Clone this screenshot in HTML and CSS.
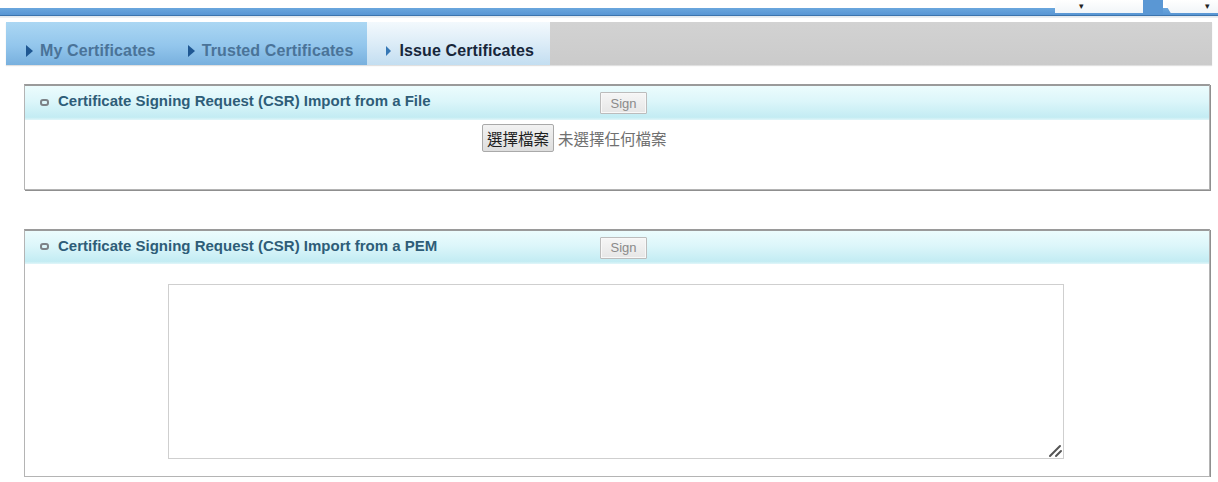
FILE: index.html
```html
<!DOCTYPE html>
<html lang="zh-Hant">
<head>
<meta charset="utf-8">
<title>Issue Certificates</title>
<link rel="stylesheet" href="styles.css">
</head>
<body>
<div class="topbar">
  <div class="sel sel-a"><span class="caret">&#9662;</span></div>
  <div class="sel-gap"></div>
  <div class="sel sel-b"><span class="caret">&#9662;</span></div>
</div>
<nav class="tabs">
  <div class="tab-group">
    <a class="tab"><svg class="arrow" viewBox="0 0 7 12" width="7" height="12"><path d="M0 0 L7 6 L0 12 Z"/></svg><span>My Certificates</span></a>
    <a class="tab tab-2"><svg class="arrow" viewBox="0 0 7 12" width="7" height="12"><path d="M0 0 L7 6 L0 12 Z"/></svg><span>Trusted Certificates</span></a>
  </div>
  <a class="tab active"><svg class="arrow" viewBox="0 0 7 12" width="7" height="12"><path d="M1 1 L6 6 L1 11 Z"/></svg><span>Issue Certificates</span></a>
  <div class="tab-rest"></div>
</nav>

<section class="panel panel-file">
  <header class="panel-head">
    <div class="panel-title"><i class="dot"></i>Certificate Signing Request (CSR) Import from a File</div>
    <button class="sign" type="button">Sign</button>
  </header>
  <div class="panel-body body-file">
    <div class="file">
      <span class="file-btn">選擇檔案</span>
      <span class="file-name">未選擇任何檔案</span>
    </div>
  </div>
</section>

<section class="panel panel-pem">
  <header class="panel-head head-pem">
    <div class="panel-title"><i class="dot"></i>Certificate Signing Request (CSR) Import from a PEM</div>
    <button class="sign" type="button">Sign</button>
  </header>
  <div class="panel-body body-pem">
    <div class="pem-wrap">
      <textarea class="pem"></textarea>
      <svg class="grip" viewBox="0 0 16 16" width="16" height="16"><path d="M3 14 L13 4 M9 14 L14 9" stroke="#555" stroke-width="2" stroke-linecap="round" fill="none"/></svg>
    </div>
  </div>
</section>
</body>
</html>
```
FILE: styles.css
```css
html, body {
  margin: 0;
  padding: 0;
  background: #ffffff;
  font-family: "Liberation Sans", Arial, sans-serif;
}

.topbar {
  height: 18px;
  display: flex;
  justify-content: flex-end;
  align-items: flex-start;
  background: linear-gradient(to bottom,
    #ffffff 0, #ffffff 8px,
    #6aa6dd 8px, #5896d4 15px,
    #3c74ad 15px, #3c74ad 16px,
    #dfe6ec 16px, #eef1f4 18px);
}

.sel {
  height: 13px;
  background: linear-gradient(#ffffff, #f1f5f8);
  display: flex;
  align-items: center;
}
.sel-a {
  width: 88px;
  justify-content: flex-start;
  padding-left: 24px;
  box-sizing: border-box;
}
.sel-gap {
  width: 20px;
  height: 15px;
  background: #5a97d4;
}
.sel-b {
  width: 55px;
  justify-content: flex-end;
  padding-right: 8px;
  box-sizing: border-box;
  clip-path: polygon(14% 100%, 0 0, 100% 0, 100% 100%);
}
.caret {
  font-size: 9px;
  line-height: 9px;
  color: #222;
}

.tabs {
  display: flex;
  height: 43px;
  margin: 4px 6px 0 6px;
  box-shadow: 0 1px 1px rgba(0,0,0,0.12);
}
.tab-group {
  display: flex;
  background: linear-gradient(to bottom, #abd7f3 0%, #93c6ec 55%, #78b0de 100%);
}
.tab {
  display: flex;
  align-items: center;
  gap: 7px;
  height: 100%;
  box-sizing: border-box;
  padding: 14px 12px 0 20px;
  font-size: 16px;
  font-weight: bold;
  letter-spacing: 0.12px;
  color: #4a7398;
  white-space: nowrap;
}
.tab-2 {
  padding-right: 14px;
}
.tab .arrow {
  fill: #1f5792;
  flex: none;
}
.tab.active {
  padding-left: 18px;
  padding-right: 16px;
  color: #17263a;
  background: linear-gradient(to bottom, #f3f9fd 0%, #dcecf7 50%, #c3def1 100%);
}
.tab.active .arrow {
  fill: #3577b5;
}
.tab-rest {
  flex: 1;
  background: linear-gradient(to bottom, #d2d2d2 0%, #cbcbcb 100%);
}

.panel {
  margin-left: 24px;
  width: 1186px;
  box-sizing: border-box;
  border: 1px solid #b4b4b4;
  border-top: 2px solid #9a9a9a;
  box-shadow: 1px 1px 0 #8f8f8f;
  background: #ffffff;
}
.panel-file {
  margin-top: 19px;
  height: 106px;
}
.panel-pem {
  margin-top: 39px;
  height: 248px;
}

.panel-head {
  display: grid;
  grid-template-columns: 575px auto;
  align-items: center;
  height: 34px;
  background: linear-gradient(to bottom, #ecfcfd 0%, #dcf6fa 45%, #c3ecf3 92%, #e2f6f9 100%);
}
.head-pem {
  height: 33px;
}
.panel-title {
  display: flex;
  align-items: center;
  padding-left: 15px;
  font-size: 15px;
  font-weight: bold;
  color: #2e5d78;
  white-space: nowrap;
  padding-bottom: 5px;
}
.dot {
  display: block;
  flex: none;
  width: 5px;
  height: 3px;
  border: 2px solid #7d8287;
  border-radius: 3px;
  margin-right: 9px;
  margin-top: 3px;
}
.sign {
  width: 47px;
  height: 22px;
  padding: 0;
  font-family: "Liberation Sans", Arial, sans-serif;
  font-size: 13px;
  color: #8a8a8a;
  background: linear-gradient(#f6f6f6, #e6e6e6);
  border: 1px solid #bcbcbc;
  border-radius: 1px;
  box-shadow: inset 0 0 0 1px #f8f8f8;
}

.body-file {
  padding-top: 4px;
}
.file {
  display: flex;
  align-items: center;
  margin-left: 457px;
  height: 28px;
}
.file-btn {
  display: flex;
  align-items: center;
  height: 28px;
  box-sizing: border-box;
  padding: 0 4px;
  font-family: "Noto Sans CJK TC", "Noto Sans CJK SC", sans-serif;
  font-size: 15.5px;
  color: #1f1f1f;
  background: linear-gradient(#f2f2f2, #dedede);
  border: 1px solid #a9a9a9;
  border-radius: 2px;
}
.file-name {
  margin-left: 4px;
  font-family: "Noto Sans CJK TC", "Noto Sans CJK SC", sans-serif;
  font-size: 15.5px;
  color: #707070;
}

.body-pem {
  padding: 20px 0 0 143px;
}
.pem-wrap {
  position: relative;
  width: 896px;
  height: 175px;
}
.pem {
  display: block;
  width: 896px;
  height: 175px;
  box-sizing: border-box;
  margin: 0;
  border: 1px solid #cfcfcf;
  background: #ffffff;
  resize: none;
  outline: none;
}
.grip {
  position: absolute;
  right: 1px;
  bottom: 1px;
}
```
